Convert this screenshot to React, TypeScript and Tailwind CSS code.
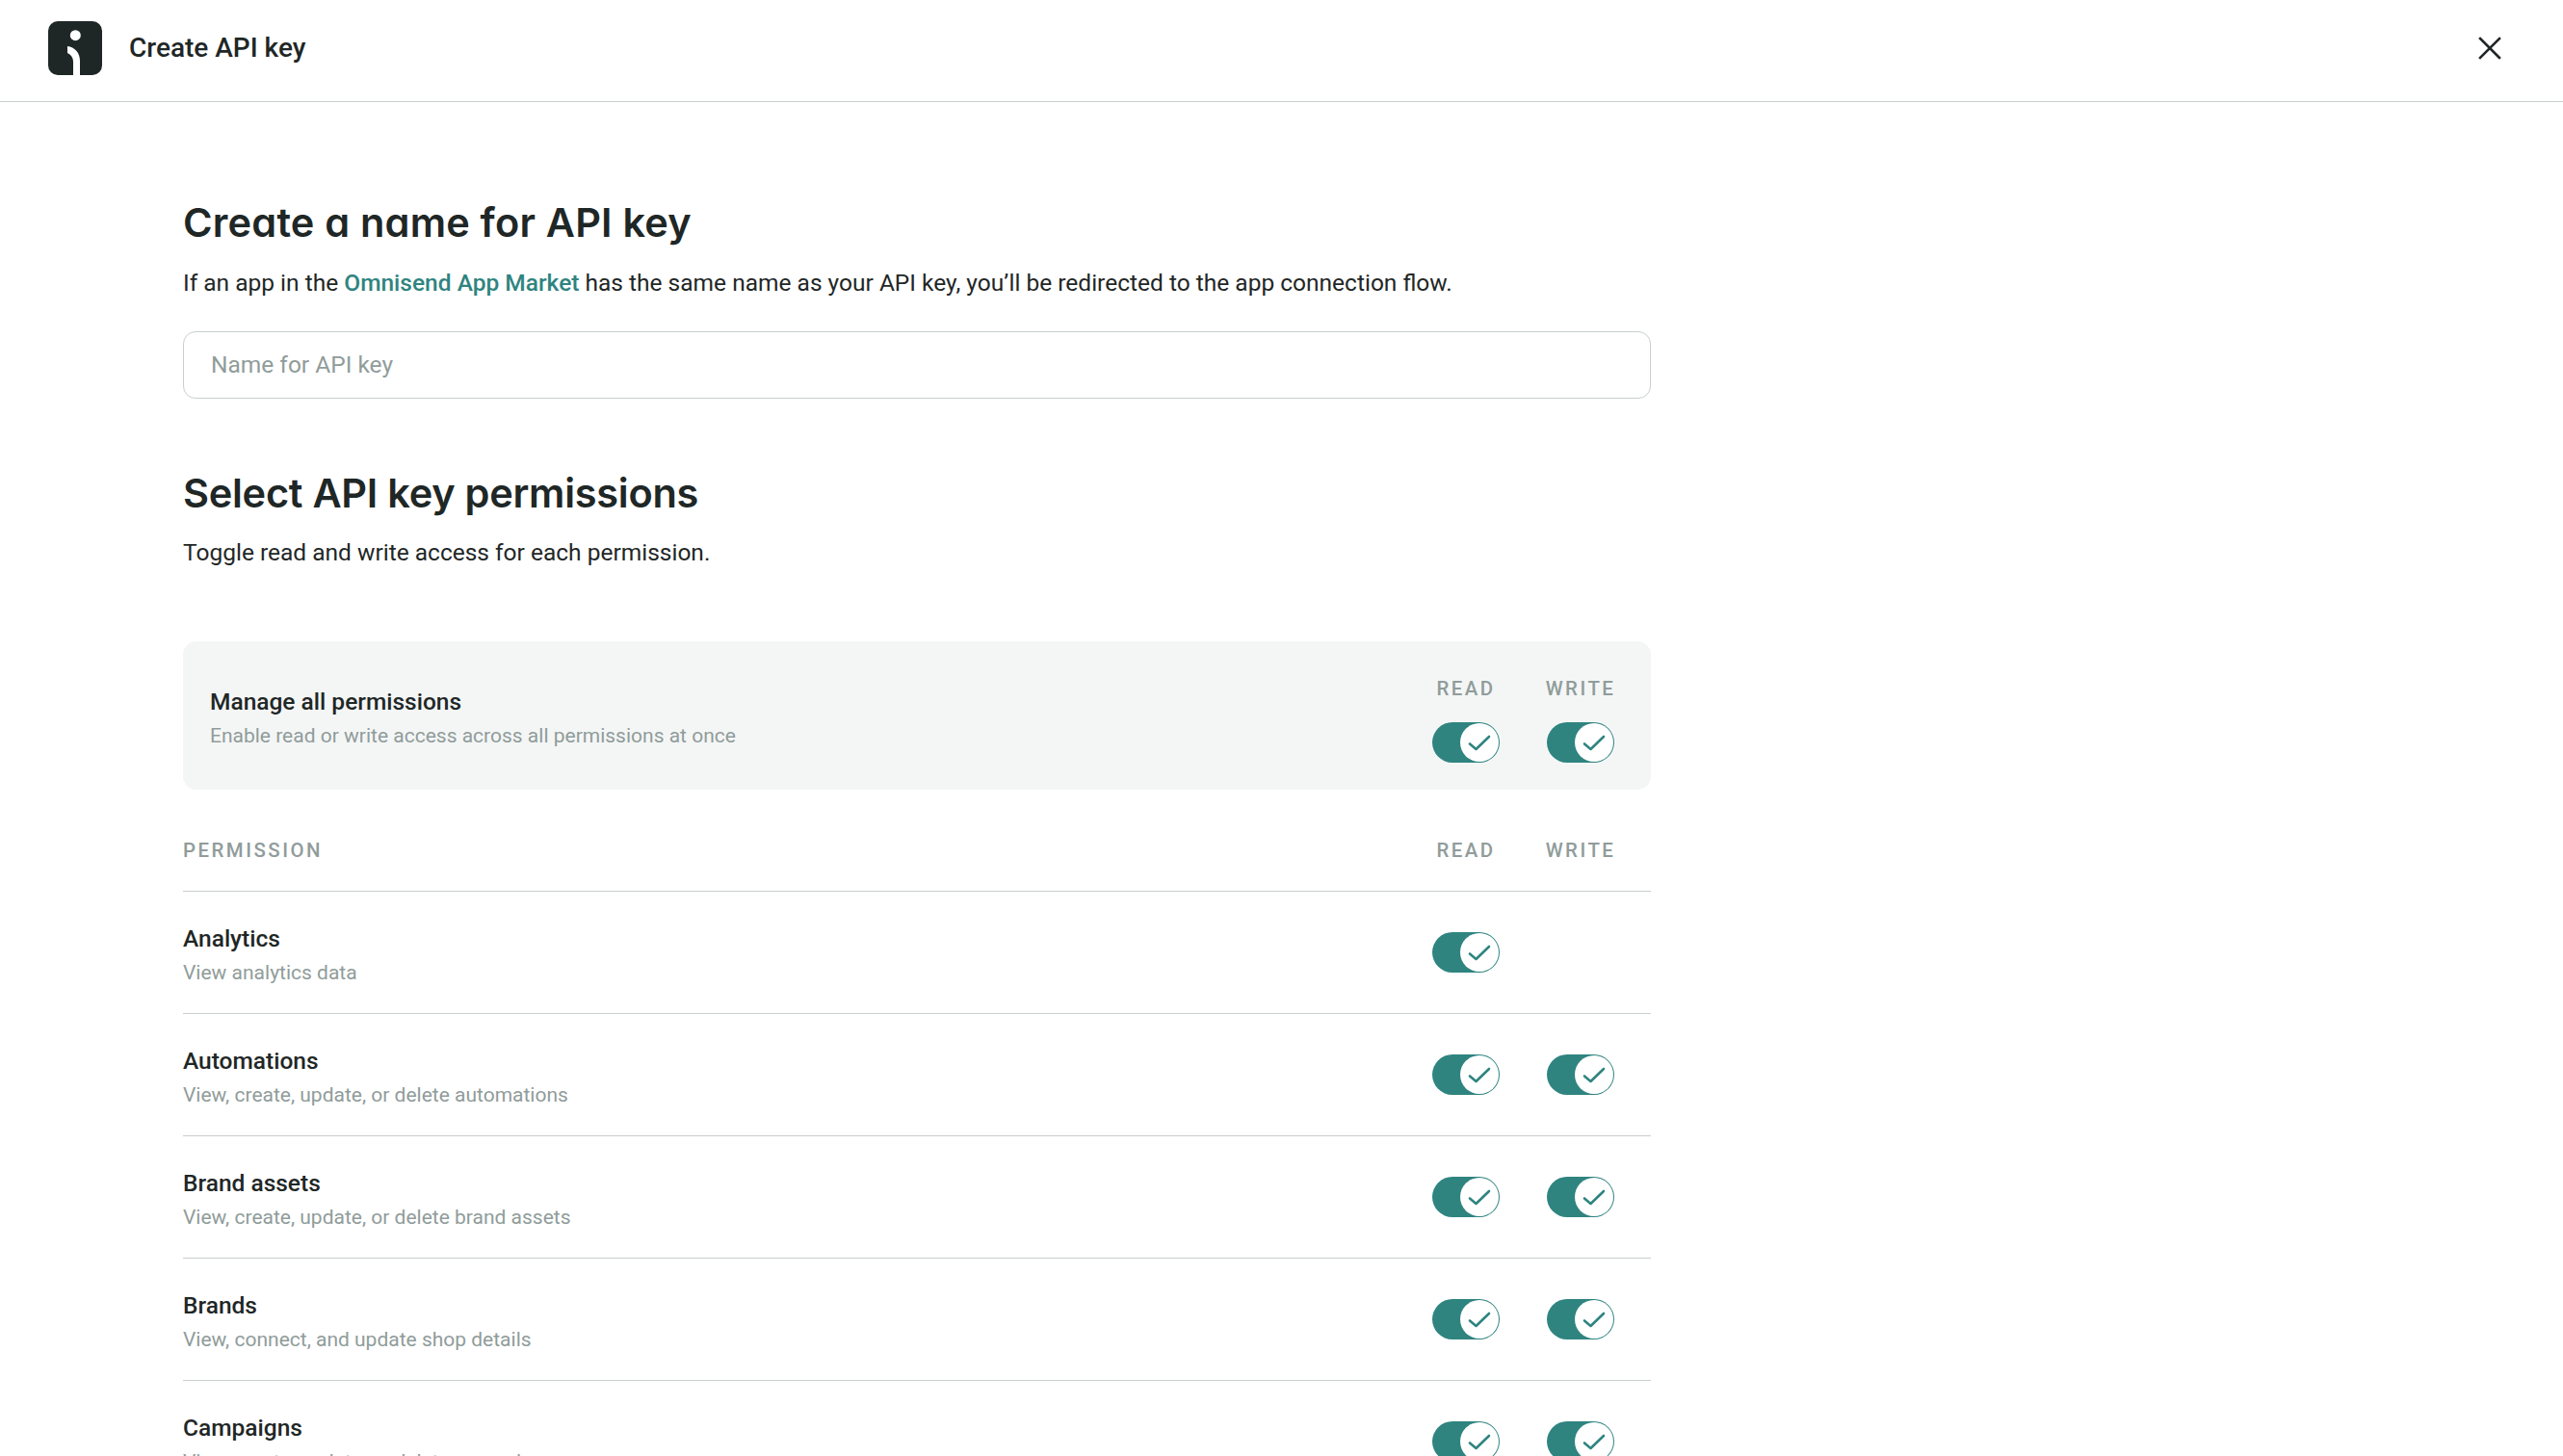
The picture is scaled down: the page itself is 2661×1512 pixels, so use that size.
const rows = [
  { title: 'Analytics', description: 'View analytics data', write: false },
  { title: 'Automations', description: 'View, create, update, or delete automations', write: true },
  { title: 'Brand assets', description: 'View, create, update, or delete brand assets', write: true },
  { title: 'Brands', description: 'View, connect, and update shop details', write: true },
  { title: 'Campaigns', description: 'View, create, update, or delete campaigns', write: true },
]

function Toggle() {
  return (
    <div className="flex h-[42px] w-[70px] items-center justify-end rounded-full bg-[#2f8480] pr-px">
      <div className="flex h-[40px] w-[40px] items-center justify-center rounded-full bg-white">
        <svg width="24" height="24" viewBox="0 0 24 24" fill="none" stroke="#2f8480" strokeWidth="2.6" strokeLinecap="round" strokeLinejoin="round">
          <path d="M2 13.5l6.5 5.5L22 6" />
        </svg>
      </div>
    </div>
  )
}

function ColumnLabel({ children }: { children: string }) {
  return <div className="flex w-[70px] justify-center text-[20.4px] leading-[24px] font-medium tracking-[2.5px] whitespace-nowrap text-[#909c9a]">{children}</div>
}

function PermissionText({ title, description }: { title: string; description: string }) {
  return (
    <div className="pt-[5px]">
      <div className="text-[24.5px] leading-[34px] font-medium">{title}</div>
      <div className="mt-[3px] text-[21px] leading-[30px] text-[#909c9a]">{description}</div>
    </div>
  )
}

export default function App() {
  return (
    <div className="h-[1512px] overflow-hidden bg-white font-['Roboto',sans-serif] text-[#1f2726]">
      <header className="flex h-[106px] items-center justify-between border-b border-[#c9cfcd] pr-[64px] pb-[5px] pl-[50px]">
        <div className="flex items-center gap-[28px]">
          <svg width="56" height="56" viewBox="0 0 56 56">
            <rect width="56" height="56" rx="10" fill="#1f2726" />
            <circle cx="28.3" cy="14.7" r="5.5" fill="#fff" />
            <path d="M20 26c7.5 1 13 6.5 13 15v15h-7V42c0-4-2.5-7.5-6-9z" fill="#fff" />
          </svg>
          <div className="text-[28px] font-medium">Create API key</div>
        </div>
        <svg width="24" height="24" viewBox="0 0 24 24" fill="none" stroke="#1f2726" strokeWidth="2.6" strokeLinecap="square">
          <path d="M2 2l20 20M22 2L2 22" />
        </svg>
      </header>

      <main className="ml-[190px] w-[1524px]">
        <h1 className="mt-[97px] font-['Inter',sans-serif] text-[41.5px] leading-[56px] font-semibold tracking-[0.2px] [font-feature-settings:'cv11']">Create a name for API key</h1>
        <p className="mt-[15px] text-[24.5px] leading-[40px]">
          If an app in the <span className="font-medium text-[#2f8480]">Omnisend App Market</span> has the same name as your API key, you’ll be redirected to the app connection flow.
        </p>
        <div className="mt-[30px] flex h-[70px] items-center rounded-[13px] border border-[#c9cfcd] pl-[28px] text-[24.5px] text-[#909c9a]">Name for API key</div>

        <h2 className="mt-[70px] font-['Inter',sans-serif] text-[41.5px] leading-[56px] font-semibold tracking-[-0.26px] [font-feature-settings:'cv11']">Select API key permissions</h2>
        <p className="mt-[14px] text-[24.5px] leading-[40px]">Toggle read and write access for each permission.</p>

        <section className="mt-[72px] flex h-[154px] items-center justify-between rounded-[14px] bg-[#f4f6f6] pr-[38px] pl-[28px]">
          <PermissionText title="Manage all permissions" description="Enable read or write access across all permissions at once" />
          <div className="mt-[8px] flex gap-[49px]">
            <div className="flex flex-col gap-[23px]"><ColumnLabel>READ</ColumnLabel><Toggle /></div>
            <div className="flex flex-col gap-[23px]"><ColumnLabel>WRITE</ColumnLabel><Toggle /></div>
          </div>
        </section>

        <div className="flex h-[106px] items-end justify-between border-b border-[#c9cfcd] pr-[38px] pb-[30px]">
          <div className="text-[20.4px] leading-[24px] font-medium tracking-[2.5px] text-[#909c9a]">PERMISSION</div>
          <div className="flex gap-[49px]">
            <ColumnLabel>READ</ColumnLabel>
            <ColumnLabel>WRITE</ColumnLabel>
          </div>
        </div>

        {rows.map((row) => (
          <div key={row.title} className="flex h-[127px] items-center justify-between border-b border-[#c9cfcd] pr-[38px]">
            <PermissionText title={row.title} description={row.description} />
            <div className="flex gap-[49px]">
              <Toggle />
              {row.write ? <Toggle /> : <div className="w-[70px]" />}
            </div>
          </div>
        ))}
      </main>
    </div>
  )
}
